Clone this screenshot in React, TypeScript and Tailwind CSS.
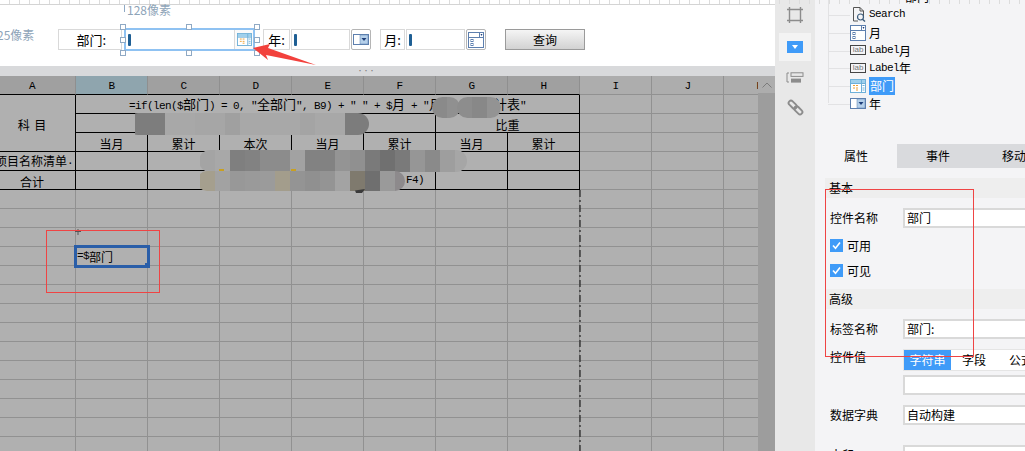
import React from "react";

const COLS = ["A", "B", "C", "D", "E", "F", "G", "H", "I", "J", "K"];
const GRID = "grid grid-cols-[76px_repeat(10,72px)] w-[796px]";
const LINE = "border-r border-b border-[#919191]";
const INK = "border-r border-b border-black";
const LOW = "border-r border-b border-black pt-[3px]";
const BOX = "box-border h-[19px] flex items-center justify-center whitespace-nowrap overflow-hidden text-[12px] leading-none text-black";

function M({ children }: { children: React.ReactNode }) {
  return <span className="whitespace-pre text-[11px] tracking-[-0.6px] [font-family:'Liberation_Mono',monospace]">{children}</span>;
}

type Cell = { t?: React.ReactNode; c?: string };

const formula = (
  <span className="text-[13px]">
    <M>=if(len($</M>部门<M>{') = 0, "'}</M>全部门<M>{'", B9) + " " + $'}</M>月<M>{' + "'}</M>月
    <span className="inline-block w-[52px]" />计表<M>"</M>
  </span>
);

const tableRows: Cell[][] = [
  [
    { t: <span className="whitespace-pre">科 <span className="ml-[2px]">目</span></span>, c: `row-span-3 h-[57px] ${LOW} pr-[11px]` },
    { t: formula, c: `col-span-7 ${INK}` },
    { c: LINE }, { c: LINE }, { c: LINE },
  ],
  [
    { c: `col-span-5 ${INK}` },
    { t: "比重", c: `col-span-2 ${LOW}` },
    { c: LINE }, { c: LINE }, { c: LINE },
  ],
  [
    { t: "当月", c: LOW }, { t: "累计", c: LOW }, { t: "本次", c: LOW }, { t: "当月", c: LOW },
    { t: "累计", c: LOW }, { t: "当月", c: LOW }, { t: "累计", c: LOW },
    { c: LINE }, { c: LINE }, { c: LINE },
  ],
  [
    { t: <>项目名称清单<M>.</M></>, c: `${INK} justify-end pr-[2px]` },
    { c: INK }, { c: INK }, { c: INK }, { c: INK }, { c: INK }, { c: INK }, { c: INK },
    { c: LINE }, { c: LINE }, { c: LINE },
  ],
  [
    { t: "合计", c: `${LOW} pr-[11px]` }, { c: INK }, { c: INK }, { c: INK }, { c: INK },
    { t: <M>F4)</M>, c: `${INK} justify-end pr-[11px]` },
    { c: INK }, { c: INK },
    { c: LINE }, { c: LINE }, { c: LINE },
  ],
];

function Mosaic({ className, colors }: { className: string; colors: string[] }) {
  return (
    <div className={`absolute flex overflow-hidden rounded-[11px] ${className}`}>
      {colors.map((c, i) => (
        <div key={i} className="h-full w-[15px] shrink-0" style={{ backgroundColor: c }} />
      ))}
    </div>
  );
}

function CalendarIcon({ className = "" }: { className?: string }) {
  return (
    <svg viewBox="0 0 16 14" className={className}>
      <rect x="0.5" y="0.5" width="15" height="13" fill="#fff" stroke="#6fb0d8" />
      <rect x="1" y="1" width="14" height="3" fill="#9fd0ec" />
      <path d="M0.5 4.5H15.5M11.5 1V13.5" stroke="#6fb0d8" fill="none" />
      <path d="M3 6.5h2M3 9h2M6 6.5h2M6 9h2M6 11h2" stroke="#f0a030" />
      <path d="M12.5 6.5h2M12.5 9h2M12.5 11h2" stroke="#6fb0d8" />
    </svg>
  );
}

function ComboIcon({ className = "" }: { className?: string }) {
  return (
    <svg viewBox="0 0 16 11" className={className}>
      <rect x="0.5" y="0.5" width="15" height="10" fill="#fff" stroke="#5d7fae" />
      <rect x="7" y="1" width="8" height="9" fill="#b5d0ea" stroke="#5d7fae" strokeWidth="0.5" />
      <path d="M8.5 4h5l-2.5 3z" fill="#1f3f7a" />
    </svg>
  );
}

function ListIcon({ className = "" }: { className?: string }) {
  return (
    <svg viewBox="0 0 16 16" className={className}>
      <rect x="0.5" y="0.5" width="15" height="15" fill="#fff" stroke="#5d7fae" />
      <path d="M0.5 5.5H15.5M11.5 0.5V5.5" stroke="#5d7fae" />
      <path d="M12.5 2h2l-1 2z" fill="#1f3f7a" />
      <rect x="3" y="7.5" width="2" height="2" fill="none" stroke="#5d7fae" />
      <rect x="3" y="11.5" width="2" height="2" fill="none" stroke="#5d7fae" />
    </svg>
  );
}

function LabIcon() {
  return (
    <div className="box-border flex h-[10px] w-[16px] items-center justify-center border border-[#444] bg-[#f4f4f6] font-['Liberation_Sans',sans-serif] text-[8px] leading-none text-[#777]">
      lab
    </div>
  );
}

function Handle({ className }: { className: string }) {
  return <div className={`absolute box-border h-[6px] w-[6px] border border-[#8fa9c4] bg-white ${className}`} />;
}

function Caret() {
  return <div className="ml-[2px] h-[12px] w-[3px] rounded-[1px] bg-[#1f5f94]" />;
}

function TreeRow({ icon, children, active }: { icon: React.ReactNode; children: React.ReactNode; active?: boolean }) {
  return (
    <div className="relative flex h-[17.8px] items-center pl-[35px]">
      <div className="absolute left-[13px] top-[9px] h-px w-[22px] bg-[#e2e2e4]" />
      <div className="flex w-[19px] items-center justify-start">{icon}</div>
      <span className={`flex h-[18px] items-center text-[12px] leading-none ${active ? "bg-[#3f9bf8] px-[1px] text-white" : "text-black"}`}>
        {children}
      </span>
    </div>
  );
}

function Field({ label, value, className = "" }: { label: string; value?: string; className?: string }) {
  return (
    <div className={`flex h-[20px] shrink-0 items-center ${className}`}>
      <span className="w-[88px] pl-[15px] text-[12px] leading-none text-black">{label}</span>
      <div className="-mr-[4px] box-border flex h-[20px] flex-1 items-center border-2 border-[#d9d9d9] bg-white pl-[2px] text-[12px] leading-none text-black">
        {value}
      </div>
    </div>
  );
}

function Check({ label, className = "" }: { label: string; className?: string }) {
  return (
    <div className={`flex h-[13px] shrink-0 items-center pl-[15px] ${className}`}>
      <div className="flex h-[13px] w-[13px] items-center justify-center bg-[#3f9bf8]">
        <svg viewBox="0 0 13 13" className="h-[13px] w-[13px]">
          <path d="M3 6.5l2.5 2.8L10 3.5" fill="none" stroke="#fff" strokeWidth="1.6" />
        </svg>
      </div>
      <span className="ml-[4px] text-[12px] leading-none text-black">{label}</span>
    </div>
  );
}

export default function App() {
  const ticks = Array.from({ length: 130 });
  const emptyRows = Array.from({ length: 14 });
  return (
    <div className="flex h-[451px] w-[1025px] overflow-hidden bg-white [font-family:'Noto_Sans_CJK_SC',sans-serif]">
      {/* Left: designer + sheet */}
      <div className="flex w-[775px] shrink-0 flex-col">
        <div className="relative h-[66px] shrink-0 bg-white">
          <div className="flex h-[5px] border-b border-[#d4d4d4]">
            {ticks.map((_, i) => (
              <div key={i} className="box-border h-[4px] w-[10px] shrink-0 border-r border-[#dcdcdc]" />
            ))}
          </div>
          <div className="absolute left-[124px] top-[5px] h-[7px] w-px bg-[#8fa9c4]" />
          <div className="absolute left-[127px] top-[3px] text-[12px] leading-[14px] text-[#8ea4b8]">128像素</div>
          <div className="absolute -left-[3px] top-[28px] text-[12px] leading-[14px] text-[#8ea4b8]">25像素</div>

          <div className="mt-[24px] flex items-center pl-[58px]">
            <div className="box-border flex h-[21px] w-[64px] items-center justify-end border border-[#d9d9d9] pr-[15px] text-[13px] leading-none">部门:</div>
            <div className="relative -my-[1px] ml-[2px] box-border flex h-[23px] w-[131px] items-center border-2 border-[#8fc2f2]">
              <Caret />
              <div className="absolute bottom-0 right-0 top-0 flex w-[19px] items-center justify-center border-l border-[#d9d9d9] bg-[#fafafa]">
                <CalendarIcon className="h-[13px] w-[15px]" />
              </div>
              <Handle className="-left-[6px] -top-[6px]" />
              <Handle className="left-[60px] -top-[6px]" />
              <Handle className="-right-[7px] -top-[6px]" />
              <Handle className="-left-[6px] top-[7px]" />
              <Handle className="-right-[7px] top-[7px]" />
              <Handle className="-left-[6px] -bottom-[7px]" />
              <Handle className="left-[60px] -bottom-[7px]" />
              <Handle className="-right-[7px] -bottom-[7px]" />
            </div>
            <div className="ml-[8px] box-border flex h-[21px] w-[27px] items-center justify-center border border-[#d9d9d9] text-[13px] leading-none">年:</div>
            <div className="ml-[1px] box-border flex h-[21px] w-[59px] items-center border border-[#d9d9d9]"><Caret /></div>
            <div className="ml-[1px] box-border flex h-[21px] w-[20px] items-center justify-center rounded-[2px] border border-[#b5b5b5]">
              <ComboIcon className="h-[11px] w-[16px]" />
            </div>
            <div className="ml-[9px] box-border flex h-[21px] w-[25px] items-center justify-center border border-[#d9d9d9] text-[13px] leading-none">月:</div>
            <div className="ml-[1px] box-border flex h-[21px] w-[59px] items-center border border-[#d9d9d9]"><Caret /></div>
            <div className="ml-[1px] box-border flex h-[21px] w-[20px] items-center justify-center rounded-[2px] border border-[#b5b5b5]">
              <ListIcon className="h-[16px] w-[16px]" />
            </div>
            <div className="ml-[19px] box-border flex h-[21px] w-[80px] items-center justify-center border border-[#9a9a9a] bg-gradient-to-b from-[#f5f5f5] to-[#d2d2d2] text-[12px] leading-none">查询</div>
          </div>

          <svg viewBox="0 0 70 25" className="absolute left-[250px] top-[43px] h-[25px] w-[70px]">
            <path d="M3 5L20 1L18 5L66 22L16 12L18 17Z" fill="#f2413c" />
          </svg>
        </div>

        <div className="relative flex h-[10px] shrink-0 items-center justify-end bg-[#d8d9db] pr-[400px]">
          <span className="text-[6px] leading-none text-[#777]">•••</span>
        </div>

        <div className="relative flex min-h-0 flex-1 bg-[#b0b0b0]">
          <div className="relative w-[758px] shrink-0 overflow-hidden">
            <div className={GRID}>
              {COLS.map((c, i) => (
                <div
                  key={c}
                  className={`${BOX} border-r pt-[3px] ${i === 0 ? "pr-[11px]" : ""} ${i < 8 ? "border-b border-b-black border-r-[#8f8f8f]" : "border-b border-[#919191]"} ${i === 1 ? "bg-[#8fa5ae]" : i < 8 ? "bg-[#a0a0a0]" : "bg-[#adadad]"}`}
                >
                  <M>{c}</M>
                </div>
              ))}
              {tableRows.flat().map((cell, i) => (
                <div key={i} className={`${BOX} ${cell.c ?? ""}`}>{cell.t}</div>
              ))}
              {emptyRows.flatMap((_, r) =>
                COLS.map((c, i) =>
                  r === 3 && i === 1 ? (
                    <div key={c + r} className={`${BOX} relative z-10 justify-start pl-[1px] outline-[3px] -outline-offset-1 outline-[#2a5ea8]`}>
                      <M>=$</M>部门
                      <div className="absolute -bottom-[2px] -right-[2px] h-[5px] w-[5px] bg-[#2a5ea8]" />
                    </div>
                  ) : (
                    <div key={c + r} className={`${BOX} ${LINE}`} />
                  ),
                ),
              )}
            </div>

            {/* page break line */}
            <svg className="absolute left-[579px] top-[114px] h-[262px] w-[2px]">
              <line x1="1" y1="0" x2="1" y2="262" stroke="#222" strokeWidth="1.2" strokeDasharray="7 3 2 3" />
            </svg>

            {/* blurred regions */}
            <Mosaic className="left-[127px] top-[37px] h-[22px] w-[242px] pl-[8px]" colors={["#7d7d7d", "#7d7d7d", "#a8a8a8", "#a8a8a8", "#a6a6a6", "#a6a6a6", "#a0a0a0", "#a8a8a8", "#a8a8a8", "#a8a8a8", "#a8a8a8", "#a4a4a4", "#a8a8a8", "#a8a8a8", "#7c7c7c", "#7c7c7c", "#a9a9a9"]} />
            <Mosaic className="left-[432px] top-[21px] h-[21px] w-[28px]" colors={["#8a8a8a", "#909090"]} />
            <Mosaic className="left-[457px] top-[21px] h-[21px] w-[44px]" colors={["#8d8d8d", "#888888", "#939393"]} />
            <Mosaic className="left-[199px] top-[74px] h-[22px] w-[268px] pl-[1px]" colors={["#a4a4a4", "#a8a8a8", "#7f7f7f", "#828282", "#8c8c8c", "#8c8c8c", "#a2a2a2", "#828282", "#828282", "#949494", "#909090", "#7a7a7a", "#707070", "#7a7a7a", "#969696", "#8a8a8a", "#9e9e9e", "#a6a6a6"]} />
            <Mosaic className="left-[197px] top-[95px] h-[20px] w-[208px] pl-[3px]" colors={["#a59f8e", "#a2a2a2", "#989898", "#9a9a9a", "#9b9b9b", "#a39d8c", "#949494", "#909090", "#949494", "#a3a3a3", "#7f7a6e", "#6f6f6f", "#9a9a9a", "#8d8a8c"]} />
            <div className="absolute left-[219px] top-[93px] h-[2px] w-[5px] bg-[#c9a020]" />
            <div className="absolute left-[291px] top-[93px] h-[2px] w-[5px] bg-[#c9a020]" />
            <div className="absolute left-[355px] top-[113px] h-[4px] w-[10px] bg-[#3a3a3a] [clip-path:polygon(0_40%,100%_0,70%_100%,10%_100%)]" />

            {/* cursor mark and annotation frame */}
            <svg viewBox="0 0 6 6" className="absolute left-[75px] top-[153px] z-20 h-[6px] w-[6px]">
              <path d="M3 0v6M0 2.5h6" stroke="#555" strokeWidth="1" />
            </svg>
            <div className="pointer-events-none absolute left-[46px] top-[154px] z-20 h-[63px] w-[114px] border border-[#ef4444]" />
          </div>

          {/* vertical scrollbar */}
          <div className="flex w-[17px] shrink-0 flex-col bg-[#9d9d9d]">
            <div className="flex h-[17px] items-center justify-center bg-[#adadad]">
              <svg viewBox="0 0 10 6" className="h-[6px] w-[10px]">
                <path d="M0.5 5.5L5 1l4.5 4.5" fill="none" stroke="#7c7c7c" />
              </svg>
            </div>
          </div>
        </div>
      </div>

      {/* Tool rail */}
      <div className="flex w-[40px] shrink-0 flex-col items-center bg-[#e8e8e8]">
        <svg viewBox="0 0 16 16" className="mt-[7px] h-[16px] w-[16px]">
          <path d="M2.5 0v16M13.5 0v16M0 2.5h16M0 13.5h16" stroke="#8c8c8c" strokeWidth="1.4" fill="none" />
        </svg>
        <div className="mt-[10px] flex h-[28px] w-[32px] items-center justify-center bg-[#f3f3f3]">
          <div className="flex h-[12px] w-[16px] items-center justify-center bg-[#3f9bf8]">
            <div className="h-0 w-0 border-x-[3px] border-t-[4px] border-x-transparent border-t-white" />
          </div>
        </div>
        <svg viewBox="0 0 18 12" className="mt-[11px] h-[12px] w-[18px]">
          <path d="M3 1H1v9h2" stroke="#8c8c8c" fill="none" />
          <rect x="5" y="0.8" width="12" height="3.6" fill="none" stroke="#8c8c8c" />
          <rect x="5" y="6.6" width="10" height="4" fill="#8c8c8c" />
        </svg>
        <svg viewBox="0 0 18 18" className="mt-[15px] h-[17px] w-[17px]">
          <g fill="none" stroke="#8c8c8c" strokeWidth="2">
            <rect x="1" y="3.5" width="10" height="5" rx="2.5" transform="rotate(45 6 6)" />
            <rect x="7" y="9.5" width="10" height="5" rx="2.5" transform="rotate(45 12 12)" />
          </g>
        </svg>
      </div>

      {/* Right panel */}
      <div className="flex min-w-0 flex-1 flex-col bg-[#f4f4f6]">
        <div className="relative h-[144px] shrink-0">
          <div className="absolute left-[90px] -top-[10px] text-[12px] leading-[14px]">部门</div>
          <div className="absolute left-[13px] top-0 h-[103px] w-px bg-[#e2e2e4]" />
          <div className="pt-[6px]">
            <TreeRow icon={
              <svg viewBox="0 0 14 15" className="ml-[2px] h-[15px] w-[14px]">
                <path d="M1.5 0.5H8l3.5 3.5V9M8 0.5V4h3.5M1.5 0.5V14H6" fill="none" stroke="#555" />
                <circle cx="8.5" cy="10" r="3" fill="none" stroke="#3c5c7c" strokeWidth="1.2" />
                <path d="M10.5 12.2l2.5 2.3" stroke="#3c5c7c" strokeWidth="1.4" />
              </svg>
            }><M>Search</M></TreeRow>
            <TreeRow icon={<ListIcon className="h-[16px] w-[16px]" />}>月</TreeRow>
            <TreeRow icon={<LabIcon />}><M>Label</M>月</TreeRow>
            <TreeRow icon={<LabIcon />}><M>Label</M>年</TreeRow>
            <TreeRow active icon={<CalendarIcon className="h-[14px] w-[16px]" />}>部门</TreeRow>
            <TreeRow icon={<ComboIcon className="h-[11px] w-[16px]" />}>年</TreeRow>
          </div>
        </div>

        <div className="relative flex min-h-0 flex-1 flex-col">
          <div className="flex h-[24px] shrink-0 items-center bg-[#d9dadd] text-[12px] leading-none">
            <div className="flex h-full w-[82px] items-center justify-center bg-[#f4f4f6]">属性</div>
            <div className="flex h-full w-[82px] items-center justify-center">事件</div>
            <div className="flex h-full w-[46px] items-center overflow-hidden whitespace-nowrap pl-[23px]">移动端</div>
          </div>

          <div className="ml-[10px] mt-[10px] flex h-[20px] shrink-0 items-center bg-[#eeeeee] pl-[4px] text-[12px] leading-none">基本</div>
          <Field label="控件名称" value="部门" className="mt-[10px]" />
          <Check label="可用" className="mt-[11px]" />
          <Check label="可见" className="mt-[12px]" />
          <div className="ml-[10px] mt-[12px] flex h-[20px] shrink-0 items-center bg-[#eeeeee] pl-[4px] text-[12px] leading-none">高级</div>
          <Field label="标签名称" value="部门:" className="mt-[10px]" />
          <div className="mt-[10px] flex h-[22px] shrink-0 items-start">
            <span className="w-[88px] pl-[15px] pt-[2px] text-[12px] leading-none">控件值</span>
            <div className="-mr-[4px] box-border flex h-[22px] flex-1 items-center overflow-hidden border border-[#e5e5e5] bg-white text-[12px] leading-none">
              <div className="flex h-full w-[47px] shrink-0 items-center justify-center bg-[#3f9bf8] text-white">字符串</div>
              <div className="flex h-full w-[46px] shrink-0 items-center justify-center">字段</div>
              <div className="ml-[12px] whitespace-nowrap">公式</div>
            </div>
          </div>
          <div className="-mr-[4px] ml-[88px] mt-[4px] box-border h-[20px] shrink-0 border-2 border-[#d9d9d9] bg-white" />
          <Field label="数据字典" value="自动构建" className="mt-[10px]" />
          <Field label="水印" className="mt-[20px]" />

          {/* annotation frame */}
          <div className="pointer-events-none absolute left-[10px] top-[45px] h-[168px] w-[149px] border border-[#ef4444]" />
        </div>
      </div>
    </div>
  );
}
